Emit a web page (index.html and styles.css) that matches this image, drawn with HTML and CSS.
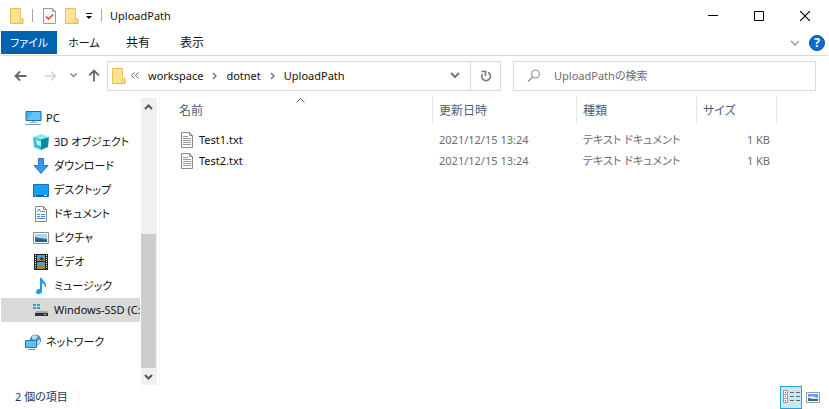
FILE: index.html
```html
<!DOCTYPE html>
<html lang="ja">
<head>
    <meta charset="UTF-8">
    <meta name="viewport" content="width=device-width, initial-scale=1.0">
    <title>UploadPath</title>
    <link rel="stylesheet" href="styles.css">
</head>
<body>
    <svg class="defs" width="0" height="0" aria-hidden="true">
        <symbol id="folder" viewBox="0 0 14 16">
            <path d="M.5.5h10v10.5h2.500v4.500H.5z" fill="#ffe391" stroke="#ecc04f"/>
            <path d="M10.500 10.500h2v4.500h-3z" fill="#ffe9a6" stroke="#ecc04f"/>
        </symbol>
        <symbol id="text-file" viewBox="0 0 12 16">
            <path d="M.5.5h8l3 3v12H.5z" fill="#fff" stroke="#8a8a8a"/>
            <path d="M8.500.5v3h3" fill="none" stroke="#8a8a8a"/>
            <path d="M2 4.500h5M2 6.500h8M2 8.500h8M2 10.500h8M2 12.500h8" stroke="#999"/>
        </symbol>
    </svg>
    <div class="window">
        <header class="titlebar">
            <svg class="folder" width="14" height="16"><use href="#folder"/></svg>
            <span class="bar"></span>
            <button class="quick" aria-label="プロパティ">
                <svg width="13" height="16" viewBox="0 0 13 16"><path d="M.5.5h9l3 3v12H.5z" fill="#f8f8f8" stroke="#9a9a9a"/><path d="M9.500.5v3h3" fill="none" stroke="#9a9a9a"/><path d="M3 8.500l2.500 2.500L10 6.500" fill="none" stroke="#e8501e" stroke-width="1.600"/></svg>
            </button>
            <button class="quick" aria-label="新しいフォルダー">
                <svg width="14" height="16"><use href="#folder"/></svg>
            </button>
            <button class="quick more" aria-label="カスタマイズ">
                <svg width="8" height="6" viewBox="0 0 8 6"><path d="M1 0h6v1H1zM1 3h6L4 6z" fill="#111"/></svg>
            </button>
            <span class="bar"></span>
            <span class="title">UploadPath</span>
            <div class="controls">
                <button aria-label="最小化"><svg width="10" height="10" viewBox="0 0 10 10"><path d="M0 4.500h10" stroke="#000"/></svg></button>
                <button aria-label="最大化"><svg width="10" height="10" viewBox="0 0 10 10"><path d="M.5.5h9v9h-9z" fill="none" stroke="#000"/></svg></button>
                <button aria-label="閉じる"><svg width="10" height="10" viewBox="0 0 10 10"><path d="M0 0l10 10M10 0L0 10" stroke="#000" stroke-width="1.200"/></svg></button>
            </div>
        </header>

        <nav class="ribbon">
            <button class="tab file">ファイル</button>
            <button class="tab">ホーム</button>
            <button class="tab kanji">共有</button>
            <button class="tab kanji">表示</button>
            <div class="ribbon-end">
                <button aria-label="リボンの展開"><svg width="10" height="6" viewBox="0 0 10 6"><path d="M1 1l4 4 4-4" fill="none" stroke="#999" stroke-width="1.300"/></svg></button>
                <button class="help" aria-label="ヘルプ">?</button>
            </div>
        </nav>

        <div class="toolbar">
            <div class="history">
                <button aria-label="戻る"><svg width="13" height="12" viewBox="0 0 13 12"><path d="M12.500 6H1.500M6 1.500L1.500 6 6 10.500" fill="none" stroke="#666" stroke-width="1.800"/></svg></button>
                <button aria-label="進む"><svg width="13" height="12" viewBox="0 0 13 12"><path d="M.5 6h11M7 1.500L11.500 6 7 10.500" fill="none" stroke="#d4d4d4" stroke-width="1.500"/></svg></button>
                <button class="recent" aria-label="最近表示した場所"><svg width="7" height="5" viewBox="0 0 7 5"><path d="M.5.5l3 3 3-3" fill="none" stroke="#888" stroke-width="1.500"/></svg></button>
                <button class="up" aria-label="上へ"><svg width="12" height="13" viewBox="0 0 12 13"><path d="M6 12.500V1.500M1.200 6.300L6 1.500l4.800 4.800" fill="none" stroke="#666" stroke-width="1.800"/></svg></button>
            </div>
            <div class="address">
                <svg width="14" height="16"><use href="#folder"/></svg>
                <svg class="root" width="8" height="7" viewBox="0 0 8 7"><path d="M3.500.5l-3 3 3 3M7.500.5l-3 3 3 3" fill="none" stroke="#666"/></svg>
                <a href="#">workspace</a>
                <svg width="5" height="8" viewBox="0 0 5 8"><path d="M1 1l3 3-3 3" fill="none" stroke="#777" stroke-width="1.500"/></svg>
                <a href="#">dotnet</a>
                <svg width="5" height="8" viewBox="0 0 5 8"><path d="M1 1l3 3-3 3" fill="none" stroke="#777" stroke-width="1.500"/></svg>
                <a href="#">UploadPath</a>
                <div class="address-end">
                    <button aria-label="以前の場所"><svg width="10" height="7" viewBox="0 0 10 7"><path d="M1 1l4 4 4-4" fill="none" stroke="#777" stroke-width="2"/></svg></button>
                    <button class="refresh" aria-label="更新"><svg width="12" height="12" viewBox="0 0 12 12"><path d="M8 2.500A4.300 4.300 0 1 1 2.500 4" fill="none" stroke="#777" stroke-width="1.600"/><path d="M1.500 1.500h4V6" fill="none" stroke="#777" stroke-width="1.600"/></svg></button>
                </div>
            </div>
            <label class="search">
                <svg width="14" height="14" viewBox="0 0 14 14"><circle cx="8.500" cy="5" r="4" fill="none" stroke="#888"/><path d="M5.700 7.800L1 12.500" stroke="#888" stroke-width="1.200"/></svg>
                <input type="text" placeholder="UploadPathの検索" aria-label="検索">
            </label>
        </div>

        <div class="content">
            <aside class="sidebar">
                <ul class="tree">
                    <li class="root-item"><a href="#">
                        <svg width="17" height="16" viewBox="0 0 17 16"><path d="M1 1.500h15v9H1z" fill="#3fb4f5" stroke="#2b6f9e"/><path d="M2 10l6-8h7v8z" fill="#62c6fb"/><path d="M7 11h3v2H7z" fill="#9ab3c0"/><path d="M4 12.500h9" stroke="#b9c6ce"/><path d="M0 14.500h16" stroke="#7a9db5"/></svg>
                        PC</a></li>
                    <li><a href="#">
                        <svg width="16" height="16" viewBox="0 0 16 16"><path d="M0 3l8 2v11l-7-3z" fill="#35c3d6"/><path d="M16 3L8 5v11l7-3z" fill="#0d8ba1"/><path d="M0 3l8-3 8 3-8 2.500z" fill="#8de9f0"/><path d="M3 6l5 1.500V12l-4-1.500z" fill="#d3f8fa"/></svg>
                        3D オブジェクト</a></li>
                    <li><a href="#">
                        <svg width="16" height="16" viewBox="0 0 16 16"><path d="M5.500.5h5v7h4.500L8 15.500 1 7.500h4.500z" fill="#3c97e4" stroke="#2379c9"/></svg>
                        ダウンロード</a></li>
                    <li><a href="#">
                        <svg width="16" height="16" viewBox="0 0 16 16"><path d="M.5 2.500h15v12H.5z" fill="#18a0f6" stroke="#1474bd"/><path d="M1 13.500h14" stroke="#0a4f87"/><path d="M2 13.500h1M11 13.500h3" stroke="#fff"/></svg>
                        デスクトップ</a></li>
                    <li><a href="#">
                        <svg width="16" height="16" viewBox="0 0 16 16"><path d="M2.500.5h8l3 3v12h-11z" fill="#fff" stroke="#8a8a8a"/><path d="M10.500.5v3h3" fill="none" stroke="#8a8a8a"/><path d="M4 6l2-3 2 3M9 5.500h3M4 8.500h3M8 8.500h4M4 10.500h3M8 10.500h4M4 12.500h8" fill="none" stroke="#4688bd"/></svg>
                        ドキュメント</a></li>
                    <li><a href="#">
                        <svg width="16" height="16" viewBox="0 0 16 16"><path d="M.5 2.500h15v11H.5z" fill="#fff" stroke="#8f8f8f"/><path d="M2 4h12v8H2z" fill="#a9d9f6"/><path d="M2 7l4 1 8 1v3H2z" fill="#346c80"/><path d="M2 10.500l12-.5v2H2z" fill="#245b8e"/></svg>
                        ピクチャ</a></li>
                    <li><a href="#">
                        <svg width="16" height="16" viewBox="0 0 16 16"><path d="M1 0h14v16H1z" fill="#222"/><path d="M2.500 1v14M13.500 1v14" stroke="#fff" stroke-dasharray="1 1"/><path d="M4 1h8v6H4zM4 8h8v7H4z" fill="#4f9bea"/><path d="M4 5l3-2 2 2 3-2v4H4zM4 13l3-3 2 2 3-1v4H4z" fill="#a78632"/><path d="M8 3l2 1v2H7z" fill="#29314d"/></svg>
                        ビデオ</a></li>
                    <li><a href="#">
                        <svg width="16" height="16" viewBox="0 0 16 16"><path d="M7 0h2c0 3 5 4 4 9h-1c0-2-1-3-3-4v8c0 4-6 4-6 1 0-2 2-3.500 4-3z" fill="#119cec"/></svg>
                        ミュージック</a></li>
                    <li class="selected"><a href="#">
                        <svg width="16" height="16" viewBox="0 0 16 16"><path d="M0 2h3v2H0zM4 2h3v2H4zM0 5h3v2H0zM4 5h3v2H4z" fill="#00adef"/><path d="M3 9h11l1 2H2z" fill="#a5a5a5"/><path d="M2 11h13v3H2z" fill="#333"/><path d="M11 12.500h2" stroke="#6eea72"/></svg>
                        Windows-SSD (C:)</a></li>
                    <li class="root-item network"><a href="#">
                        <svg width="17" height="16" viewBox="0 0 17 16"><circle cx="10.500" cy="6" r="5.500" fill="#3f89bd"/><path d="M7 2l4-1 2 2-3 3-3-1zM12 7l3-2v4l-3 2z" fill="#b4d9ec"/><path d="M.5 6.500h11v7H.5z" fill="#58c1f7" stroke="#2c76a5"/><path d="M3 15.500h7" stroke="#6597b5"/></svg>
                        ネットワーク</a></li>
                </ul>
                <div class="scrollbar">
                    <button aria-label="上へスクロール"><svg width="9" height="6" viewBox="0 0 9 6"><path d="M1 5l3.500-3.500L8 5" fill="none" stroke="#555" stroke-width="2"/></svg></button>
                    <div class="thumb"></div>
                    <button aria-label="下へスクロール"><svg width="9" height="6" viewBox="0 0 9 6"><path d="M1 1l3.500 3.500L8 1" fill="none" stroke="#555" stroke-width="2"/></svg></button>
                </div>
            </aside>
            <main class="files">
                <table>
                    <colgroup>
                        <col class="col-name"><col class="col-date"><col class="col-type"><col class="col-size"><col>
                    </colgroup>
                    <thead>
                        <tr>
                            <th class="name">名前
                                <svg class="sort" width="9" height="5" viewBox="0 0 9 5"><path d="M.5 4.500l4-4 4 4" fill="none" stroke="#666"/></svg>
                            </th>
                            <th>更新日時</th>
                            <th>種類</th>
                            <th>サイズ</th>
                            <td></td>
                        </tr>
                    </thead>
                    <tbody>
                        <tr>
                            <td class="name"><div class="file-name"><svg width="12" height="16"><use href="#text-file"/></svg>Test1.txt</div></td>
                            <td>2021/12/15 13:24</td>
                            <td>テキスト ドキュメント</td>
                            <td class="size">1 KB</td>
                            <td></td>
                        </tr>
                        <tr>
                            <td class="name"><div class="file-name"><svg width="12" height="16"><use href="#text-file"/></svg>Test2.txt</div></td>
                            <td>2021/12/15 13:24</td>
                            <td>テキスト ドキュメント</td>
                            <td class="size">1 KB</td>
                            <td></td>
                        </tr>
                    </tbody>
                </table>
            </main>
        </div>

        <footer class="status">
            <span class="count">2 個の項目</span>
            <div class="views">
                <button class="view active" aria-label="詳細">
                    <svg width="17" height="14" viewBox="0 0 17 14"><path d="M.5.5h4v4h-4zM.5 4.500h4v4h-4zM.5 8.500h4v4h-4z" fill="#fff" stroke="#999"/><path d="M2 2.500h1M2 6.500h1" stroke="#555"/><path d="M2 10.500h1" stroke="#b33"/><path d="M7 2.500h4M13 2.500h4M7 6.500h4M13 6.500h4M7 10.500h4M13 10.500h4" stroke="#666"/></svg>
                </button>
                <button class="view" aria-label="大アイコン">
                    <svg width="14" height="11" viewBox="0 0 14 11"><path d="M.5.5h13v10H.5z" fill="#fff" stroke="#999"/><path d="M2 2h10v7H2z" fill="#5b9fe6"/><path d="M2 5l4-1 6 2v1H2z" fill="#d5e9f7"/><path d="M2 6l4 1h6v2H2z" fill="#35697f"/></svg>
                </button>
            </div>
        </footer>
    </div>
</body>
</html>
```

FILE: styles.css
```css
* {
    box-sizing: border-box;
}
body {
    margin: 0;
    background: #fff;
    color: #111;
    font-family: "Noto Sans", "Noto Sans CJK JP", sans-serif;
    font-size: 11px;
    line-height: 16px;
    font-feature-settings: "palt";
}
button {
    display: flex;
    align-items: center;
    justify-content: center;
    padding: 0;
    border: none;
    background: none;
    color: inherit;
    font: inherit;
    font-feature-settings: inherit;
}
a {
    color: inherit;
    text-decoration: none;
}
svg {
    display: block;
    flex: none;
}
.defs {
    position: absolute;
}
.window {
    display: flex;
    flex-direction: column;
    min-height: 100vh;
    padding: 0 1px;
}

.titlebar {
    display: flex;
    align-items: center;
    height: 31px;
    padding-left: 9px;
}
.bar {
    width: 1px;
    height: 13px;
    margin: 0 8px;
    background: #aaa;
}
.quick {
    margin-left: 2px;
}
.quick + .quick {
    margin-left: 9px;
}
.quick + .more {
    margin-left: 6px;
}
.controls {
    display: flex;
    align-self: stretch;
    margin-left: auto;
}
.controls button {
    width: 46px;
}

.ribbon {
    display: flex;
    height: 25px;
    padding-bottom: 1px;
    border-bottom: 1px solid #dadbdc;
}
.tab {
    width: 54px;
}
.tab.kanji {
    font-size: 12px;
}
.tab.file {
    width: 56px;
    background: #0063b1;
    color: #fff;
}
.ribbon-end {
    display: flex;
    align-items: center;
    gap: 9px;
    margin-left: auto;
    padding-right: 3px;
}
.help {
    width: 16px;
    height: 16px;
    border: 1px solid #0a549b;
    border-radius: 50%;
    background: #0a6cce;
    color: #fff;
    font-size: 12px;
    font-weight: bold;
}

.toolbar {
    display: grid;
    grid-template-columns: 94px 394fr 303fr;
    align-items: center;
    gap: 12px;
    height: 41px;
    padding: 0 12px 2px 0;
}
.history {
    display: flex;
    align-items: center;
    padding-left: 13px;
    gap: 17px;
}
.history .recent {
    margin-left: -4px;
}
.history .up {
    margin-left: -6px;
}
.address {
    display: flex;
    align-items: center;
    height: 30px;
    padding-left: 4px;
    gap: 9px;
    border: 1px solid #d9d9d9;
}
.address .root {
    margin-left: -4px;
}
.address-end {
    display: flex;
    align-self: stretch;
    margin-left: auto;
}
.address-end button {
    width: 30px;
}
.address-end .refresh {
    border-left: 1px solid #d9d9d9;
}
.search {
    display: flex;
    align-items: center;
    height: 30px;
    padding-left: 13px;
    gap: 13px;
    border: 1px solid #d9d9d9;
}
.search input {
    flex: 1;
    min-width: 0;
    padding: 0;
    border: none;
    outline: none;
    font: inherit;
    font-feature-settings: inherit;
}
.search input::placeholder {
    color: #6d6d6d;
}

.content {
    display: flex;
    flex: 1;
}
.sidebar {
    display: flex;
    width: 159px;
    padding-top: 1px;
    border-right: 1px solid #f5f5f5;
}
.tree {
    flex: 1;
    min-width: 0;
    margin: 0;
    padding: 8px 1px 0 0;
    list-style: none;
}
.tree a {
    display: flex;
    align-items: center;
    height: 24px;
    padding-left: 32px;
    gap: 5px;
    overflow: hidden;
    white-space: nowrap;
}
.tree .root-item a {
    padding-left: 24px;
    gap: 4px;
}
.tree .selected {
    background: #d9d9d9;
}
.tree .network {
    margin-top: 8px;
}
.scrollbar {
    display: flex;
    flex-direction: column;
    width: 16px;
    margin-right: 2px;
    background: #f0f0f0;
}
.scrollbar button {
    width: 15px;
    height: 17px;
}
.scrollbar .thumb {
    width: 15px;
    height: 134px;
    margin-top: auto;
    background: #cdcdcd;
}

.files {
    flex: 1;
    min-width: 0;
}
table {
    width: 100%;
    table-layout: fixed;
    border-spacing: 0;
}
.col-name {
    width: 273px;
}
.col-date {
    width: 144px;
}
.col-type {
    width: 120px;
}
.col-size {
    width: 80px;
}
th {
    position: relative;
    height: 26px;
    padding: 2px 6px 0;
    border-right: 1px solid #e5e5e5;
    color: #4c607a;
    font-size: 12px;
    font-weight: normal;
    text-align: left;
}
.sort {
    position: absolute;
    top: 1px;
    left: 50%;
}
td {
    height: 21px;
    padding: 0 7px 0 6px;
    color: #6d6d6d;
    white-space: nowrap;
}
tbody::before {
    display: block;
    height: 6px;
    content: "";
}
th.name {
    padding-left: 19px;
}
td.name {
    padding-left: 21px;
    color: #111;
}
.file-name {
    display: flex;
    align-items: center;
    gap: 6px;
}
td.size {
    text-align: right;
}

.status {
    display: flex;
    align-items: center;
    height: 24px;
    padding: 0 8px 0 14px;
    color: #1e395b;
}
.count {
    padding-right: 10px;
    border-right: 1px solid #f0f0f0;
}
.views {
    display: flex;
    gap: 4px;
    margin-left: auto;
}
.view {
    height: 23px;
}
.view.active {
    width: 22px;
    border: 1px solid #26a0da;
    background: #cbe8f6;
}
```
